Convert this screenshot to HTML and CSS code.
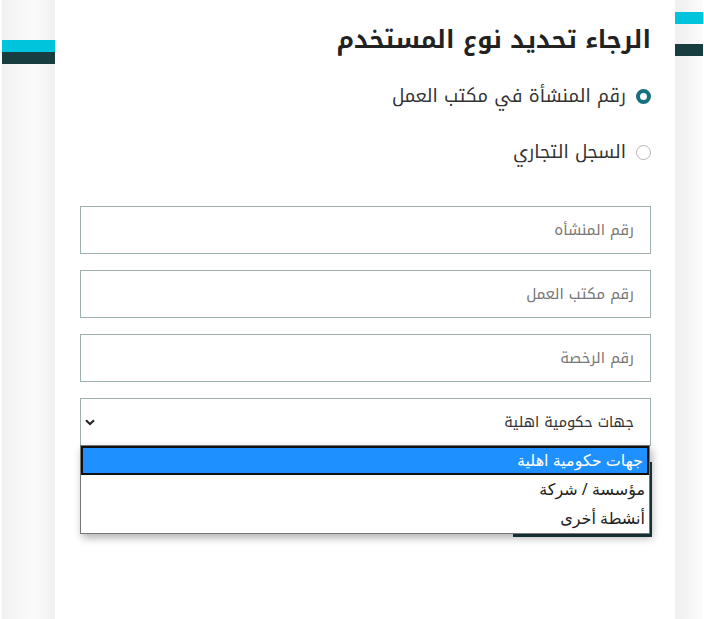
FILE: index.html
```html
<!DOCTYPE html>
<html lang="ar" dir="rtl">
<head>
<meta charset="utf-8">
<link rel="stylesheet" href="styles.css">
</head>
<body>
<div class="page">
  <div class="edge edge-right">
    <span class="bar bar-cyan bar-r1"></span>
    <span class="bar bar-dark bar-r2"></span>
  </div>
  <main class="card">
    <h1 class="title">الرجاء تحديد نوع المستخدم</h1>
    <div class="radios">
      <label class="radio-row"><span class="radio checked"></span><span>رقم المنشأة في مكتب العمل</span></label>
      <label class="radio-row"><span class="radio"></span><span>السجل التجاري</span></label>
    </div>
    <div class="fields">
      <div class="field"><span class="ph">رقم المنشأه</span></div>
      <div class="field"><span class="ph">رقم مكتب العمل</span></div>
      <div class="field"><span class="ph">رقم الرخصة</span></div>
      <div class="select-wrap">
        <div class="field select">
          <span class="val">جهات حكومية اهلية</span>
          <svg class="chev" width="10" height="7" viewBox="0 0 10 7"><path d="M1 1.2 L5 5 L9 1.2" fill="none" stroke="#222" stroke-width="2"/></svg>
        </div>
        <ul class="popup">
          <li class="opt active">جهات حكومية اهلية</li>
          <li class="opt">مؤسسة / شركة</li>
          <li class="opt">أنشطة أخرى</li>
        </ul>
      </div>
      <div class="btn-row"><span class="next-btn"></span></div>
    </div>
  </main>
  <div class="edge edge-left">
    <span class="bar bar-cyan bar-l1"></span>
    <span class="bar bar-dark bar-l2"></span>
  </div>
</div>
</body>
</html>
```
FILE: styles.css
```css
* { box-sizing: border-box; }
html, body { margin: 0; padding: 0; background: #fff; }
body {
  font-family: "Noto Kufi Arabic", "Noto Sans", "DejaVu Sans", sans-serif;
  color: #222;
  overflow: hidden;
}
.page {
  display: flex;
  height: 619px;
  padding-right: 1px;
  padding-left: 2px;
}
.edge {
  position: relative;
  display: flex;
  flex-direction: column;
}
.edge-right {
  width: 28px;
  background: linear-gradient(to left, #fcfcfc 0%, #f5f5f5 50%, #efefef 100%);
}
.edge-left {
  width: 53px;
  background: linear-gradient(to right, #f0f0f0 0%, #f9f9f9 45%, #fbfbfb 60%, #f1f1f1 100%);
}
.bar { display: block; width: 100%; }
.bar-cyan { background: #00c4db; height: 12px; }
.bar-dark { background: #173d41; height: 12px; }
.bar-r1 { margin-top: 12px; }
.bar-r2 { margin-top: 20px; }
.bar-l1 { margin-top: 40px; }
.bar-l2 { margin-top: 0; }

.card {
  width: 620px;
  background: #fff;
  padding: 20px 24px 0 24px;
}
.title {
  margin: 0;
  font-size: 24.4px;
  font-weight: 700;
  line-height: 40px;
  color: #222;
}
.radios {
  margin-top: 23px;
  display: flex;
  flex-direction: column;
  gap: 30px;
}
.radio-row {
  display: flex;
  align-items: center;
  gap: 10px;
  font-size: 18.3px;
  line-height: 26px;
  color: #333;
}
.radio {
  width: 15px;
  height: 15px;
  border-radius: 50%;
  border: 1px solid #b5b5b5;
  background: #fff;
  flex: none;
}
.radio.checked {
  border: 4px solid #17707f;
}
.fields {
  margin-top: 41px;
  display: flex;
  flex-direction: column;
  gap: 16px;
  margin-left: 1px;
}
.field {
  height: 48px;
  border: 1px solid #9dafae;
  display: flex;
  align-items: center;
  padding: 0 16px;
  font-size: 15px;
}
.ph { color: #777; }
.select-wrap { position: relative; }
.select { justify-content: space-between; padding-left: 4px; }
.val { color: #333; font-size: 14.6px; }
.chev { display: block; }
.popup {
  position: absolute;
  top: 47px;
  left: 0;
  right: 1px;
  margin: 0;
  padding: 0;
  list-style: none;
  background: #fff;
  border: 1px solid #767676;
  box-shadow: 2px 4px 8px rgba(0,0,0,0.3);
  z-index: 5;
  font-family: "Noto Sans", "DejaVu Sans", sans-serif;
}
.opt {
  height: 29px;
  line-height: 29px;
  padding: 0 4px;
  font-size: 16px;
  color: #222;
}
.opt.active {
  background: #1e90ff;
  color: #fff;
  border: 2px solid #111;
  line-height: 25px;
}
.btn-row { display: flex; }
.next-btn {
  display: block;
  width: 139px;
  height: 75px;
  background: #173d41;
  margin-right: -1px;
}
```
